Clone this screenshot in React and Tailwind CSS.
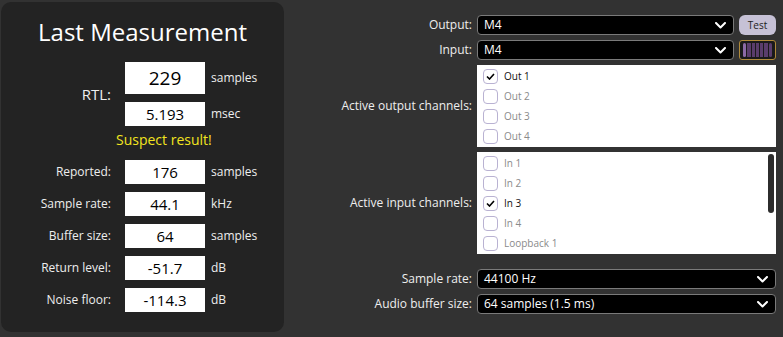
import React from "react";

const font = { fontFamily: '"Open Sans", "Noto Sans", sans-serif' };

function Chevron({ className = "" }) {
  return (
    <svg width="11" height="7" viewBox="0 0 11 7" className={className}>
      <path d="M1 1 L5.5 5.5 L10 1" fill="none" stroke="white" strokeWidth="2" strokeLinecap="round" strokeLinejoin="round" />
    </svg>
  );
}

function Select({ value, className = "" }) {
  return (
    <div className={"h-[20px] rounded-[4px] border border-[#7a7a7a] bg-black flex items-center justify-between pl-[6px] pr-[7px] " + className}>
      <span className="text-[12px] text-white leading-none">{value}</span>
      <Chevron />
    </div>
  );
}

function Check({ label, checked }) {
  return (
    <div className="h-[20px] flex items-center pl-[6px]">
      <div className="w-[15px] h-[15px] rounded-[4px] border border-[#b9b2d2] bg-white flex items-center justify-center">
        {checked && (
          <svg width="9" height="7" viewBox="0 0 9 7">
            <path d="M1 3.5 L3.5 6 L8 1" fill="none" stroke="black" strokeWidth="1.6" />
          </svg>
        )}
      </div>
      <span className={"ml-[6px] text-[10px] leading-none " + (checked ? "text-[#111]" : "text-[#8a8a8a]")}>{label}</span>
    </div>
  );
}

function Row({ label, value, unit }) {
  return (
    <div className="flex items-center h-[24px]">
      <div className="w-[110px] text-right text-[12px] text-[#eeeeee]">{label}</div>
      <div className="ml-[14px] w-[80px] h-[24px] bg-white flex items-center justify-center text-[15px] text-black">{value}</div>
      <div className="ml-[6px] text-[12px] text-[#eeeeee]">{unit}</div>
    </div>
  );
}

export default function App() {
  return (
    <div className="w-[783px] h-[337px] bg-[#323232] flex" style={font}>
      <div className="ml-[1px] mt-[2px] w-[283px] h-[330px] rounded-[10px] bg-[#232323] flex flex-col">
        <div className="mt-[13px] text-center text-[24px] text-white leading-[34px]">Last Measurement</div>
        <div className="mt-[13px] flex">
          <div className="w-[110px] flex items-center justify-end text-[15px] text-[#eeeeee]">RTL:</div>
          <div className="ml-[14px] flex flex-col">
            <div className="flex items-center">
              <div className="w-[80px] h-[32px] bg-white flex items-center justify-center text-[19px] text-black">229</div>
              <div className="ml-[6px] text-[12px] text-[#eeeeee]">samples</div>
            </div>
            <div className="mt-[8px] flex items-center">
              <div className="w-[80px] h-[24px] bg-white flex items-center justify-center text-[15px] text-black">5.193</div>
              <div className="ml-[6px] text-[12px] text-[#eeeeee]">msec</div>
            </div>
          </div>
        </div>
        <div className="mt-[4px] pl-[115px] text-[14px] text-[#f2e51f] leading-[20px]">Suspect result!</div>
        <div className="mt-[10px] flex flex-col gap-[8px]">
          <Row label="Reported:" value="176" unit="samples" />
          <Row label="Sample rate:" value="44.1" unit="kHz" />
          <Row label="Buffer size:" value="64" unit="samples" />
          <Row label="Return level:" value="-51.7" unit="dB" />
          <Row label="Noise floor:" value="-114.3" unit="dB" />
        </div>
      </div>

      <div className="flex-1 pt-[15px] flex flex-col text-[12px] text-[#eeeeee]">
        <div className="flex items-center h-[20px]">
          <div className="w-[188px] text-right">Output:</div>
          <Select value="M4" className="ml-[5px] w-[257px]" />
          <div className="ml-[5px] w-[37px] h-[20px] rounded-[6px] bg-[#c6c1d6] flex items-center justify-center text-[10px] text-[#222]">Test</div>
        </div>
        <div className="mt-[5px] flex items-center h-[20px]">
          <div className="w-[188px] text-right">Input:</div>
          <Select value="M4" className="ml-[5px] w-[257px]" />
          <div className="ml-[5px] w-[37px] h-[20px] rounded-[3px] border border-[#b08a3a] bg-[#1a1a1a] flex items-center px-[3px] gap-[1px]">
            <div className="flex-1 h-[14px] rounded-[2px] bg-[#8c6aa6]" />
            <div className="flex-1 h-[14px] bg-[#5a3d6c]" />
            <div className="flex-1 h-[14px] bg-[#5a3d6c]" />
            <div className="flex-1 h-[14px] bg-[#5a3d6c]" />
            <div className="flex-1 h-[14px] bg-[#5a3d6c]" />
            <div className="flex-1 h-[14px] bg-[#5a3d6c]" />
            <div className="flex-1 h-[14px] rounded-[2px] bg-[#5a3d6c]" />
          </div>
        </div>
        <div className="mt-[5px] flex items-center">
          <div className="w-[188px] text-right">Active output channels:</div>
          <div className="ml-[5px] w-[299px] h-[82px] bg-white py-[1px]">
            <Check label="Out 1" checked />
            <Check label="Out 2" />
            <Check label="Out 3" />
            <Check label="Out 4" />
          </div>
        </div>
        <div className="mt-[5px] flex items-center">
          <div className="w-[188px] text-right">Active input channels:</div>
          <div className="ml-[5px] w-[299px] h-[102px] bg-white py-[1px] relative">
            <Check label="In 1" />
            <Check label="In 2" />
            <Check label="In 3" checked />
            <Check label="In 4" />
            <Check label="Loopback 1" />
            <div className="absolute right-[2px] top-[2px] w-[6px] h-[59px] rounded-full bg-[#2c2c2c]" />
          </div>
        </div>
        <div className="mt-[15px] flex items-center h-[20px]">
          <div className="w-[188px] text-right">Sample rate:</div>
          <Select value="44100 Hz" className="ml-[5px] w-[299px]" />
        </div>
        <div className="mt-[5px] flex items-center h-[20px]">
          <div className="w-[188px] text-right">Audio buffer size:</div>
          <Select value="64 samples (1.5 ms)" className="ml-[5px] w-[299px]" />
        </div>
      </div>
    </div>
  );
}
